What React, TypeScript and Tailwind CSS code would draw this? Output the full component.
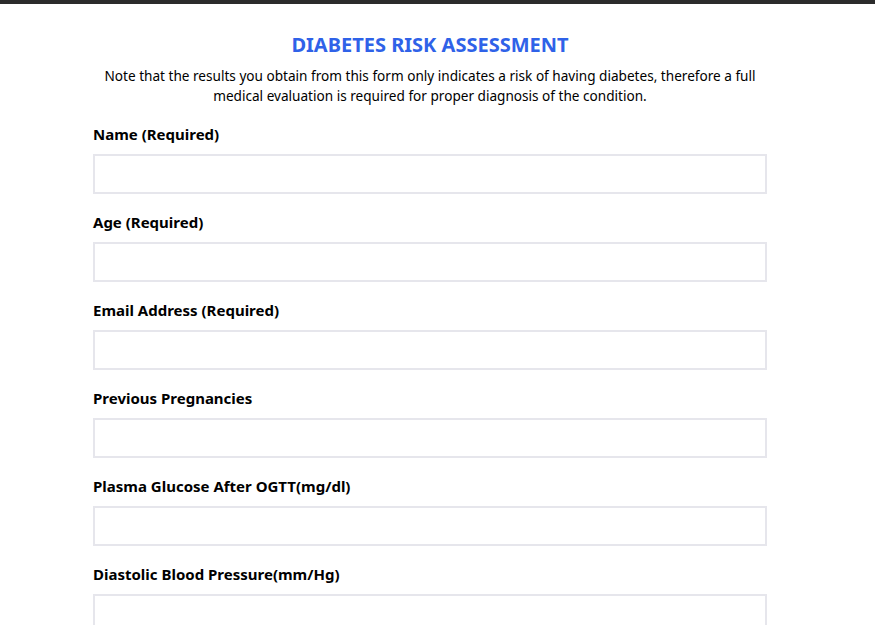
export default function App() {
  const fields = [
    "Name (Required)",
    "Age (Required)",
    "Email Address (Required)",
    "Previous Pregnancies",
    "Plasma Glucose After OGTT(mg/dl)",
    "Diastolic Blood Pressure(mm/Hg)",
  ];

  return (
    <div className="min-h-screen bg-white border-t-[4px] border-[#2b2b2b]" style={{ fontFamily: '"Noto Sans", sans-serif' }}>
      <form className="ml-[93px] w-[674px] pt-[29px]">
        <h1 className="text-center text-[20px] font-bold text-[#2f62e8] leading-[24px]">DIABETES RISK ASSESSMENT</h1>
        <p className="mt-[9px] text-center text-[13.6px] leading-[20px] text-black">
          Note that the results you obtain from this form only indicates a risk of having diabetes, therefore a full
          medical evaluation is required for proper diagnosis of the condition.
        </p>
        <div className="mt-[18px] flex flex-col gap-[18px]">
          {fields.map(f => (
            <div key={f} className="flex flex-col">
              <label className="text-[15px] font-bold text-black leading-[20px]">{f}</label>
              <input type="text" className="mt-[10px] h-[40px] w-full border-2 border-[#e6e6ec] bg-white px-2 outline-none" />
            </div>
          ))}
        </div>
      </form>
    </div>
  );
}
